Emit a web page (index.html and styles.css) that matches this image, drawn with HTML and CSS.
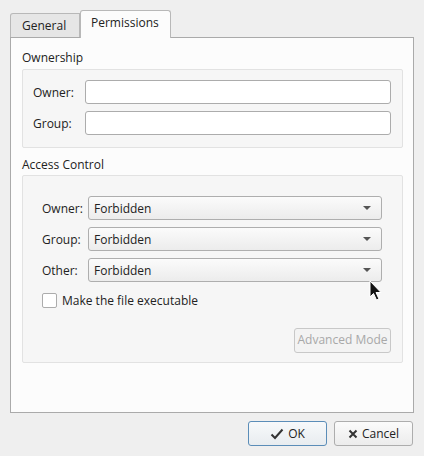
FILE: index.html
```html
<!DOCTYPE html>
<html>
<head>
<meta charset="utf-8">
<link rel="stylesheet" href="styles.css">
</head>
<body>
<div class="dialog">
  <div class="tabs">
    <div class="tab">General</div>
    <div class="tab active">Permissions</div>
  </div>
  <div class="pane">
    <div class="section-title">Ownership</div>
    <div class="group own">
      <div class="row"><span class="lbl">Owner:</span><div class="input"></div></div>
      <div class="row"><span class="lbl">Group:</span><div class="input"></div></div>
    </div>
    <div class="section-title ac">Access Control</div>
    <div class="group acc">
      <div class="crow"><span class="clbl">Owner:</span><div class="combo"><span>Forbidden</span><i class="arrow"></i></div></div>
      <div class="crow"><span class="clbl">Group:</span><div class="combo"><span>Forbidden</span><i class="arrow"></i></div></div>
      <div class="crow"><span class="clbl">Other:</span><div class="combo"><span>Forbidden</span><i class="arrow"></i></div></div>
      <div class="check"><span class="box"></span><span>Make the file executable</span></div>
      <div class="adv-row"><div class="adv">Advanced Mode</div></div>
    </div>
  </div>
  <div class="buttons">
    <div class="btn ok"><svg width="14" height="12" viewBox="0 0 14 12"><path d="M1.5 6.5 L5 10 L12.5 1.5" fill="none" stroke="#333" stroke-width="2"/></svg>OK</div>
    <div class="btn"><svg width="10" height="10" viewBox="0 0 10 10"><path d="M1.5 1.5 L8.5 8.5 M8.5 1.5 L1.5 8.5" fill="none" stroke="#333" stroke-width="2"/></svg>Cancel</div>
  </div>
</div>
<svg class="cursor" width="14" height="22" viewBox="0 0 14 22"><path d="M1 1 L1 17 L4.5 13.5 L7.5 20 L10 19 L7 12.5 L12 12.5 Z" fill="#111" stroke="#fff" stroke-width="1"/></svg>
</body>
</html>
```
FILE: styles.css
```css
html, body { margin: 0; padding: 0; }
body {
  width: 424px; height: 456px; background: #efefef;
  font-family: "Open Sans", "Noto Sans", sans-serif; font-size: 12px; color: #222;
  position: relative; overflow: hidden;
}
.dialog { padding: 10px 10px 0 10px; }
.tabs { display: flex; align-items: flex-end; height: 27px; }
.tab {
  box-sizing: border-box; height: 24px; padding: 0 11px; line-height: 23px;
  background: #e6e6e6; border: 1px solid #b8b8b8; border-bottom: none;
  border-radius: 3px 0 0 0; width: 70px;
}
.tab.active {
  height: 28px; background: #fcfcfc; width: 91px;
  border-radius: 3px 3px 0 0; line-height: 24px; padding: 0 10px; margin-bottom: -1px;
  position: relative; z-index: 1;
}
.pane {
  box-sizing: border-box; width: 404px; height: 376px;
  background: #fcfcfc; border: 1px solid #aaa; padding: 12px 10px 0 11px;
}
.section-title { height: 19px; line-height: 16px; }
.section-title.ac { margin-top: 9px; height: 16px; line-height: 16px; }
.group {
  box-sizing: border-box; width: 381px;
  background: #f6f6f6; border: 1px solid #e2e2e2; border-radius: 2px;
}
.group.own { padding: 10px 11px 12px 10px; height: 79px; }
.row { display: flex; align-items: center; height: 24px; }
.row + .row { margin-top: 7px; }
.lbl { width: 52px; }
.input {
  box-sizing: border-box; flex: 1; height: 24px; background: #fff;
  border: 1px solid #acacac; border-radius: 3px;
}
.group.acc { margin-top: 2px; height: 188px; padding: 20px 20px 0 19px; }
.crow { display: flex; align-items: center; height: 24px; }
.crow + .crow { margin-top: 7px; }
.clbl { width: 46px; }
.combo {
  box-sizing: border-box; flex: 1; height: 24px; border: 1px solid #aeaeae; border-radius: 3px;
  background: linear-gradient(#fbfbfb, #ececec); display: flex; align-items: center;
  padding: 0 10px 0 5px; justify-content: space-between;
}
.arrow {
  width: 0; height: 0; border-left: 4px solid transparent; border-right: 4px solid transparent;
  border-top: 4px solid #555;
}
.check { display: flex; align-items: center; margin-top: 10px; height: 16px; }
.box {
  box-sizing: border-box; width: 15px; height: 15px; border: 1px solid #acacac; border-radius: 2px;
  background: #fff; margin-right: 5px;
}
.adv-row { display: flex; justify-content: flex-end; margin-top: 20px; margin-right: -9px; }
.adv {
  box-sizing: border-box; height: 25px; width: 97px; border: 1px solid #c8c8c8; border-radius: 3px;
  color: #a8a8a8; text-align: center; line-height: 22px; background: #f3f3f3;
}
.buttons { display: flex; justify-content: flex-end; gap: 7px; margin-top: 8px; width: 403px; }
.btn {
  box-sizing: border-box; width: 79px; height: 25px; border: 1px solid #adadad; border-radius: 3px;
  background: linear-gradient(#fbfbfb, #ececec); display: flex; align-items: center; justify-content: center; gap: 4px;
}
.btn.ok { border-color: #5b8db8; background: linear-gradient(#f7f9fb, #e8ecef); }
.cursor { position: absolute; left: 369px; top: 280px; }
```
